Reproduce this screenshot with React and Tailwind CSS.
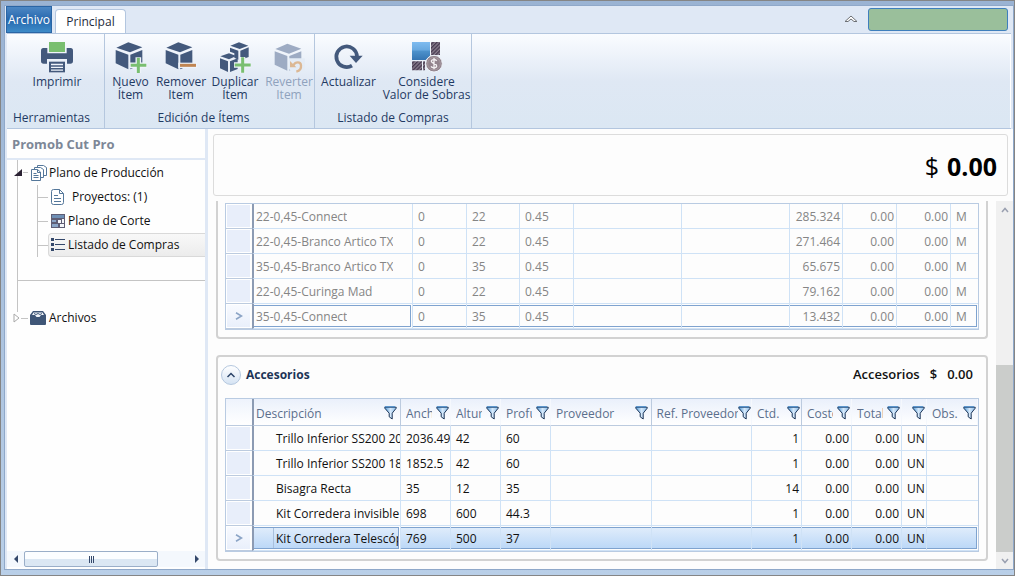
import clsx from 'clsx';

// ==========================================
// Data
// ==========================================

const EDGE_ROWS = [
  ['22-0,45-Connect', '0', '22', '0.45', '', '', '285.324', '0.00', '0.00', 'M'],
  ['22-0,45-Branco Artico TX', '0', '22', '0.45', '', '', '271.464', '0.00', '0.00', 'M'],
  ['35-0,45-Branco Artico TX', '0', '35', '0.45', '', '', '65.675', '0.00', '0.00', 'M'],
  ['22-0,45-Curinga Mad', '0', '22', '0.45', '', '', '79.162', '0.00', '0.00', 'M'],
  ['35-0,45-Connect', '0', '35', '0.45', '', '', '13.432', '0.00', '0.00', 'M'],
];

const EDGE_COLS = [
  'w-[161px]', 'w-[54px]', 'w-[53px]', 'w-[54px]', '', '',
  'w-[53px]', 'w-[54px]', 'w-[54px]', 'w-[27px]',
];

const ACCESSORY_ROWS = [
  ['Trillo Inferior SS200 203', '2036.49', '42', '60', '', '', '1', '0.00', '0.00', 'UN', ''],
  ['Trillo Inferior SS200 185', '1852.5', '42', '60', '', '', '1', '0.00', '0.00', 'UN', ''],
  ['Bisagra Recta', '35', '12', '35', '', '', '14', '0.00', '0.00', 'UN', ''],
  ['Kit Corredera invisible 6', '698', '600', '44.3', '', '', '1', '0.00', '0.00', 'UN', ''],
  ['Kit Corredera Telescópi', '769', '500', '37', '', '', '1', '0.00', '0.00', 'UN', ''],
];

const ACCESSORY_COLS = [
  'w-[149px]', 'w-[50px]', 'w-[50px]', 'w-[50px]', '', '',
  'w-[50px]', 'w-[50px]', 'w-[50px]', 'w-[25px]', 'w-[51px]',
];

const ACCESSORY_HEAD = [
  'Descripción', 'Anch', 'Altur', 'Profu', 'Proveedor', 'Ref. Proveedor',
  'Ctd.', 'Costo', 'Total', '', 'Obs.',
];

// ==========================================
// Icons
// ==========================================

function Cube({ fill = '#43597c' }) {
  return (
    <g fill={fill}>
      <path d="M4 20 40 4 82 19 45 34Z" />
      <path d="M2 27 40 41V85L2 67Z" />
      <path d="M46 41 82 27V68L46 85Z" />
    </g>
  );
}

function NewIcon() {
  return (
    <svg viewBox="0 0 96 96" className="size-8" aria-hidden="true">
      <Cube />
      <path d="M70 49v47M45 73h51" stroke="#eef3fa" strokeWidth="17" />
      <path d="M70 50v46M47 73h47" stroke="#79bf70" strokeWidth="9" />
    </svg>
  );
}

function RemoveIcon() {
  return (
    <svg viewBox="0 0 96 96" className="size-8" aria-hidden="true">
      <Cube />
      <path d="M40 73h56" stroke="#eef3fa" strokeWidth="16" />
      <path d="M45 73h48" stroke="#c08552" strokeWidth="9" />
    </svg>
  );
}

function DuplicateIcon() {
  return (
    <svg viewBox="0 0 96 96" className="size-8" aria-hidden="true">
      <g fill="#43597c">
        <path d="M34 14 60 4 88 14 62 24Z" />
        <path d="M33 20 58 29V56L46 50V37L33 32Z" />
        <path d="M64 29 89 19V48L64 57Z" />
        <path d="M4 46 30 37 52 45 30 55Z" />
        <path d="M3 52 27 61V93L3 82Z" />
        <path d="M33 61 56 52V84L33 93Z" />
      </g>
      <path d="M71 48v48M45 72h51" stroke="#eef3fa" strokeWidth="16" />
      <path d="M71 49v46M47 72h48" stroke="#79bf70" strokeWidth="9" />
    </svg>
  );
}

function RevertIcon() {
  return (
    <svg viewBox="0 0 96 96" className="size-8" aria-hidden="true">
      <g transform="translate(3 4)">
        <Cube fill="#9dabc3" />
      </g>
      <path d="M48 52H96V96H60L48 84Z" fill="#e4ecf6" />
      <path d="M61 73C68 61 83 62 84 73C85 82 81 89 70 92" fill="none" stroke="#dcb894" strokeWidth="7" />
      <path d="M51 60V79H70Z" fill="#dcb894" />
    </svg>
  );
}

function PrintIcon() {
  return (
    <svg viewBox="0 0 96 96" className="size-8" aria-hidden="true">
      <path d="M7 21h12v16h58V21h12q7 0 7 8v31q0 8-8 8H78V54H18v14H8q-8 0-8-8V29q0-8 7-8Z" fill="#43597c" />
      <path d="M24 3H72V33H24Z" fill="#79bf70" />
      <path d="M24 62H72V94H24Z" fill="#43597c" />
      <path d="M30 70.500H66M30 79H66M30 87.500H66" stroke="#eef3fa" strokeWidth="4" />
    </svg>
  );
}

function RefreshIcon() {
  return (
    <svg viewBox="0 0 96 96" className="size-8" aria-hidden="true">
      <path d="M72 46A31 31 0 1 0 57 74" fill="none" stroke="#43597c" strokeWidth="11" />
      <path d="M50 44H89L69 66Z" fill="#43597c" />
    </svg>
  );
}

function LeftoverIcon() {
  return (
    <svg viewBox="0 0 96 96" className="size-8" aria-hidden="true">
      <defs>
        <linearGradient id="sheet" x1="0" y1="0" x2="0" y2="1">
          <stop offset="0" stopColor="#7fbcf0" />
          <stop offset=".45" stopColor="#68a8df" />
          <stop offset=".5" stopColor="#4d92cc" />
          <stop offset="1" stopColor="#3575b2" />
        </linearGradient>
        <pattern id="hatch" width="8" height="8" patternUnits="userSpaceOnUse" patternTransform="rotate(45)">
          <path d="M0 0H8V8H0Z" fill="#8b7f8f" />
          <path d="M0 0H4V8H0Z" fill="#45394f" />
        </pattern>
      </defs>
      <path d="M3 3H57V44L44 57H3Z" fill="url(#sheet)" />
      <path d="M60 3H87V42H60ZM3 61H33V88H3ZM36 61H42V88H36Z" fill="url(#hatch)" />
      <circle cx="69" cy="68" r="25" fill="#93848d" stroke="#eef3fa" strokeWidth="3" />
      <circle cx="69" cy="68" r="19" fill="none" stroke="#b0a3aa" strokeWidth="2" />
      <path d="M77 60C74 54 61 54 61 61C61 69 77 66 77 75C77 82 63 82 60 76M69 51V85" fill="none" stroke="#f4f1f3" strokeWidth="4" />
    </svg>
  );
}

function FilterIcon() {
  return (
    <svg viewBox="0 0 13 14" className="h-3.5 w-[13px] shrink-0" aria-hidden="true">
      <defs>
        <linearGradient id="funnel" x1="0" y1="0" x2="1" y2="0">
          <stop offset="0" stopColor="#4f9ad8" />
          <stop offset=".5" stopColor="#d6e9fb" />
          <stop offset="1" stopColor="#8bbce8" />
        </linearGradient>
      </defs>
      <path d="M.8 1.200H12.200V2.200L8.200 7.200V13L5.200 10.800V7.200L.8 2.200Z" fill="url(#funnel)" stroke="#1d3557" />
      <path d="M.8 .8H11" stroke="#3a86cc" />
    </svg>
  );
}

function ProductionIcon() {
  return (
    <svg viewBox="0 0 16 16" className="size-4" fill="#fff" stroke="#54779a" aria-hidden="true">
      <path d="M6.500 .5h6l3 2v8h-9Z" />
      <path d="M3.500 2.500h6l3 2v8h-9Z" />
      <path d="M.5 4.500h6l3 2.500v8.500h-9Z" />
      <path d="M6.500 4.500v3h3M2.500 8.500h3M2.500 10.500h5M2.500 12.500h5" fill="none" />
    </svg>
  );
}

function PageIcon() {
  return (
    <svg viewBox="0 0 16 16" className="size-4" fill="#fff" stroke="#54779a" aria-hidden="true">
      <path d="M3.500 .5h6l4 4v9q0 2-2 2h-8q-2 0-2-2v-11q0-2 2-2Z" />
      <path d="M9.500 .5v4h4M4 6.500h4M4 9.500h7M4 12.500h7" fill="none" />
    </svg>
  );
}

function CutPlanIcon() {
  return (
    <svg viewBox="0 0 16 16" className="size-4" aria-hidden="true">
      <path d="M1 1H15V15H1Z" fill="#5e5d74" />
      <path d="M2 2H14V5H2Z" fill="#6e8fb5" />
      <path d="M2 7H6V9H2ZM2 11H8V14H2Z" fill="#8aa5c6" />
      <path d="M8 7H11V10H8ZM12 6H14V10H12ZM10 11H14V14H10Z" fill="#f4f6fa" />
    </svg>
  );
}

function ListIcon() {
  return (
    <svg viewBox="0 0 16 16" className="size-4" fill="#34486b" aria-hidden="true">
      <path d="M1 1h3v3H1zM1 6h3v3H1zM1 11h3v3H1zM5 2h10v1H5zM5 7h10v1H5zM5 12h10v1H5z" />
    </svg>
  );
}

function ArchiveIcon() {
  return (
    <svg viewBox="0 0 16 16" className="size-4" aria-hidden="true">
      <path d="M3 1H13L16 5V14Q16 15 15 15H1Q0 15 0 14V5Z" fill="#3f5677" />
      <path d="M3.500 2.500H12.500L14 5H11L9.500 7H6.500L5 5H2Z" fill="#f3f6fa" />
      <path d="M4 3.500 6 4.500 8 3.500 10 4.500 12 3.500" fill="none" stroke="#3f5677" />
    </svg>
  );
}

// ==========================================
// Ribbon
// ==========================================

function RibbonButton({ icon, lines, width, disabled }) {
  return (
    <button
      disabled={disabled}
      className={clsx(
        'flex flex-col items-center text-center leading-[13px] whitespace-nowrap',
        disabled ? 'text-[#8fa2bd]' : 'text-[#1f3a63]',
        width,
      )}
    >
      {icon}
      <span className="mt-0.5">
        {lines.map((line) => (
          <span key={line} className="block">{line}</span>
        ))}
      </span>
    </button>
  );
}

function RibbonGroup({ title, align = 'text-center', children }) {
  return (
    <section className="flex flex-col border-r border-[#b5c7de] pt-[7px] pb-0.5">
      <div className="flex flex-1 items-start">{children}</div>
      <h2 className={clsx('leading-4 text-[#1f3a63]', align)}>{title}</h2>
    </section>
  );
}

function Ribbon() {
  return (
    <header className="mr-0.5">
      <div className="flex h-7 items-end border-b border-[#b3c6df]">
        <button className="-ml-px h-[27px] w-[46px] self-start border border-[#2a65a5] bg-linear-to-b from-[#4c87c4] via-[#2768ae] to-[#3d8bc8] text-white">
          Archivo
        </button>
        <button className="ml-[3px] h-6 w-[71px] rounded-t-sm border border-b-0 border-[#b3c6df] bg-white text-[#1e2a3c]">
          Principal
        </button>
        <button aria-label="Contraer cinta" className="mb-2.5 ml-auto">
          <svg viewBox="0 0 14 8" className="h-2 w-3.5" fill="#fff" stroke="#6d7075">
            <path d="M1 6.500 7 1 13 6.500H10L7 4 4 6.500Z" />
          </svg>
        </button>
        <input
          aria-label="Buscar"
          className="mb-0.5 ml-2.5 h-[23px] w-[140px] self-end rounded-[3px] border border-[#3f7fbd] bg-[#9abf9b] px-2 outline-none"
        />
        <span className="w-[3px]" />
      </div>
      <div className="flex h-[94px] border-r border-white bg-linear-to-b from-[#fafcff] via-[#dfe8f4] via-50% to-[#dbe7f3]">
        <RibbonGroup title="Herramientas" align="pl-1.5 text-left">
          <RibbonButton icon={<PrintIcon />} lines={['Imprimir']} width="mr-[-3px] w-[100px]" />
        </RibbonGroup>
        <RibbonGroup title="Edición de Ítems" align="pr-3 text-center">
          <RibbonButton icon={<NewIcon />} lines={['Nuevo', 'Ítem']} width="w-[51px]" />
          <RibbonButton icon={<RemoveIcon />} lines={['Remover', 'Item']} width="w-[50px]" />
          <RibbonButton icon={<DuplicateIcon />} lines={['Duplicar', 'Ítem']} width="w-[58px]" />
          <RibbonButton icon={<RevertIcon />} lines={['Reverter', 'Item']} width="w-[50px]" disabled />
        </RibbonGroup>
        <RibbonGroup title="Listado de Compras">
          <RibbonButton icon={<RefreshIcon />} lines={['Actualizar']} width="w-[67px]" />
          <RibbonButton icon={<LeftoverIcon />} lines={['Considere', 'Valor de Sobras']} width="w-[89px]" />
        </RibbonGroup>
      </div>
      <div className="h-px bg-[#b3c6df]" />
    </header>
  );
}

// ==========================================
// Sidebar
// ==========================================

function TreeItem({ icon, label, gap = 'gap-0.5', active }) {
  return (
    <li className="flex h-6 items-center">
      <span className="w-2.5 border-t border-[#c4c4c4]" />
      <a
        href="#"
        className={clsx(
          'flex h-6 flex-1 items-center border pl-px',
          gap,
          active
            ? 'rounded-l border-r-0 border-[#d9d9d9] bg-linear-to-b from-[#f8f8f8] to-[#ececec]'
            : 'border-transparent',
        )}
      >
        {icon}
        {label}
      </a>
    </li>
  );
}

function Sidebar() {
  return (
    <aside className="flex w-[201px] shrink-0 flex-col border-r-3 border-[#dfe8f5] bg-[#fefefe]">
      <h1 className="h-[31px] border-b-2 border-[#dfe8f5] pl-[5px] text-[13px] leading-[31px] font-bold text-[#7d8797]">
        Promob Cut Pro
      </h1>
      <nav className="flex-1 pl-2.5 whitespace-nowrap text-[#111]">
        <div className="h-[121px] border-b border-l border-[#c4c4c4]">
          <div className="-ml-1 flex h-[25px] items-center">
            <svg viewBox="0 0 9 8" className="h-2 w-[9px]" aria-hidden="true">
              <path d="M8 0V7H0Z" fill="#2b2233" />
            </svg>
            <span className="mr-0.5 w-[5px] border-t border-[#c4c4c4]" />
            <a href="#" className="flex items-center gap-0.5 pl-px">
              <ProductionIcon />
              Plano de Producción
            </a>
          </div>
          <ul className="ml-[19px] border-l border-[#c4c4c4]">
            <TreeItem icon={<PageIcon />} label="Proyectos: (1)" gap="gap-1.5" />
            <TreeItem icon={<CutPlanIcon />} label="Plano de Corte" />
            <TreeItem icon={<ListIcon />} label="Listado de Compras" active />
          </ul>
        </div>
        <div className="h-[31px] border-l border-[#c4c4c4]" />
        <div className="-ml-1 flex h-3 items-center">
          <svg viewBox="0 0 8 10" className="h-2.5 w-2" fill="#fff" stroke="#a9a9a9" aria-hidden="true">
            <path d="M1 1V9L6 5Z" />
          </svg>
          <span className="mr-0.5 w-[7px] border-t border-[#c4c4c4]" />
          <a href="#" className="flex items-center gap-[3px]">
            <ArchiveIcon />
            Archivos
          </a>
        </div>
      </nav>
      <div className="mb-0.5 flex h-4 items-center bg-[#f4f8fd]">
        <button aria-label="Izquierda" className="flex w-[17px] justify-center">
          <svg viewBox="0 0 4 8" className="h-2 w-1" fill="#34486b"><path d="M4 0V8L0 4Z" /></svg>
        </button>
        <div className="flex h-4 flex-1">
          <div className="flex h-4 w-[134px] items-center justify-center gap-px rounded-xs border border-[#9aaec8] bg-linear-to-b from-[#fbfdff] from-50% to-[#dbe7f3] to-50%">
            <span className="h-[7px] w-px bg-[#34486b]" />
            <span className="h-[7px] w-px bg-[#34486b]" />
            <span className="h-[7px] w-px bg-[#34486b]" />
          </div>
        </div>
        <button aria-label="Derecha" className="flex w-[17px] justify-center">
          <svg viewBox="0 0 4 8" className="h-2 w-1" fill="#34486b"><path d="M0 0V8L4 4Z" /></svg>
        </button>
      </div>
    </aside>
  );
}

// ==========================================
// Tables
// ==========================================

function RowHandle({ current }) {
  return (
    <td className="border-b border-[#bccbdf] p-0">
      <div
        className={clsx(
          'mr-px flex h-6 items-center justify-center border border-white',
          current ? 'bg-linear-to-b from-[#f8faff] to-[#e9effb]' : 'bg-[#e8eefa]',
        )}
      >
        {current && (
          <svg viewBox="0 0 8 8" className="size-2" fill="none" stroke="#8ba4c6" strokeWidth="1.600">
            <path d="M1 .8 6.500 4 1 7.200" />
          </svg>
        )}
      </div>
    </td>
  );
}

function Row({ cells, rightAligned, current, indent, filled }) {
  return (
    <tr className="h-[25px]">
      <RowHandle current={current} />
      {cells.map((text, i) => (
        <td
          key={i}
          className={clsx(
            'border-r border-b border-[#cfe2f6] p-0',
            i === 0 && 'border-l-2 border-l-[#8c9bb3]',
            i === cells.length - 1 && 'border-r-0',
          )}
        >
          <div
            className={clsx(
              'my-px flex h-[22px] items-center overflow-hidden whitespace-nowrap',
              rightAligned.includes(i) ? 'justify-end pr-0.5' : i > 0 && 'pl-[5px]',
              current && 'border-y border-[#7fa3cf]',
              current && i === cells.length - 1 && 'mr-px border-r',
              current && i === 0 && 'mr-px border-r',
              current && filled && 'bg-linear-to-b from-[#dfecfb] to-[#bcd8f7]',
            )}
          >
            {i === 0 && indent && (
              <span className={clsx('h-full w-5 shrink-0', current && 'border-r border-[#a9c0dc]')} />
            )}
            <span className={clsx('pt-0.5', i === 0 && 'overflow-hidden pl-0.5')}>{text}</span>
          </div>
        </td>
      ))}
    </tr>
  );
}

function Grid({ cols, head, children }) {
  return (
    <table className="w-full table-fixed border-separate border-spacing-0 border border-[#b9cbe2]">
      <colgroup>
        <col className="w-[26px]" />
        {cols.map((width, i) => (
          <col key={i} className={width} />
        ))}
      </colgroup>
      {head && (
        <thead>
          <tr className="h-[27px]">
            <th className="border-b border-[#bccbdf] bg-linear-to-b from-[#eef3fc] to-white p-0" />
            {head.map((label, i) => (
              <th
                key={i}
                className={clsx(
                  'border-r border-b border-b-[#bccbdf] bg-linear-to-b from-[#eaf0fb] to-white p-0 font-normal text-[#5b6f8c]',
                  [0, 4, 6].includes(i) ? 'border-r-[#bccbdf]' : 'border-r-[#f5f8fd]',
                  i === 0 && 'border-l-2 border-l-[#8c9bb3]',
                )}
              >
                <div
                  className={clsx(
                    'flex h-[26px] items-center pt-px',
                    i === 0 ? 'pl-0.5' : 'pl-[5px]',
                    i === 5 ? 'pr-0' : i === 0 || i === 4 ? 'pr-[3px]' : 'pr-px',
                  )}
                >
                  <span className={clsx('flex-1 overflow-hidden pt-[3px] text-left whitespace-nowrap', i !== 5 && 'mr-1')}>
                    {label}
                  </span>
                  <FilterIcon />
                </div>
              </th>
            ))}
          </tr>
        </thead>
      )}
      <tbody>{children}</tbody>
    </table>
  );
}

function Content() {
  return (
    <div className="flex min-h-0 flex-1">
      <div className="min-w-0 flex-1 overflow-hidden pr-2 pl-2">
        <section className="rounded-b border-2 border-t-0 border-[#d2d2d2] px-[7px] pt-0.5 pb-[7px] text-[#858585]">
          <Grid cols={EDGE_COLS}>
            {EDGE_ROWS.map((cells, i) => (
              <Row key={i} cells={cells} rightAligned={[6, 7, 8]} current={i === 4} />
            ))}
          </Grid>
        </section>
        <section className="mt-4 rounded border-2 border-[#d2d2d2] px-[7px] pb-[7px] text-[#111]">
          <div className="mb-1.5 flex h-[35px] items-center">
            <button
              aria-label="Contraer Accesorios"
              className="-ml-1 flex size-5 items-center justify-center rounded-full border border-[#b5c8df] bg-linear-to-b from-white to-[#d5e3f3]"
            >
              <svg viewBox="0 0 10 6" className="h-1.5 w-2.5" fill="none" stroke="#2c4569" strokeWidth="1.500">
                <path d="M1.500 5 5 1.500 8.500 5" />
              </svg>
            </button>
            <h2 className="ml-[5px] text-xs font-bold text-[#1d3557]">Accesorios</h2>
            <p className="mr-1.5 ml-auto flex text-[13px] font-semibold">
              <span>Accesorios</span>
              <span className="ml-2.5">$</span>
              <span className="ml-2.5">0.00</span>
            </p>
          </div>
          <Grid cols={ACCESSORY_COLS} head={ACCESSORY_HEAD}>
            {ACCESSORY_ROWS.map((cells, i) => (
              <Row key={i} cells={cells} rightAligned={[6, 7, 8]} current={i === 4} indent filled />
            ))}
          </Grid>
        </section>
      </div>
      <div className="flex w-[17px] flex-col items-center bg-[#f0f0f0] text-[#9aa0b0]">
        <button aria-label="Arriba" className="flex h-[17px] items-center">
          <svg viewBox="0 0 8 6" className="h-1.5 w-2" fill="none" stroke="currentColor" strokeWidth="1.500">
            <path d="M1 5 4 1.500 7 5" />
          </svg>
        </button>
        <div className="flex w-full flex-1 flex-col justify-end">
          <div className="h-[56%] bg-[#cbcdcb]" />
        </div>
        <button aria-label="Abajo" className="flex h-[17px] items-center">
          <svg viewBox="0 0 8 6" className="h-1.5 w-2" fill="none" stroke="currentColor" strokeWidth="1.500">
            <path d="M1 1 4 4.500 7 1" />
          </svg>
        </button>
      </div>
    </div>
  );
}

export default function App() {
  return (
    <div className="flex h-screen flex-col overflow-hidden border border-[#858585] bg-linear-to-b from-[#9ab3d3] to-[#b9cfe8] pt-1 pb-[5px] pl-[3px] font-['Open_Sans','Noto_Sans',sans-serif] text-[12px]">
      <div className="flex min-h-0 flex-1 flex-col border border-[#8fa8c9] bg-[#dfe8f5] pl-0.5">
        <Ribbon />
        <div className="flex min-h-0 flex-1">
          <Sidebar />
          <main className="flex min-w-0 flex-1 flex-col bg-[#fdfdfd]">
            <div className="m-[5px] flex h-[62px] items-center justify-end gap-2 rounded-[3px] border border-[#dcdcdc] pt-1 pr-2.5 text-[25px] text-black">
              <span>$</span>
              <span className="font-bold">0.00</span>
            </div>
            <Content />
          </main>
        </div>
      </div>
    </div>
  );
}
